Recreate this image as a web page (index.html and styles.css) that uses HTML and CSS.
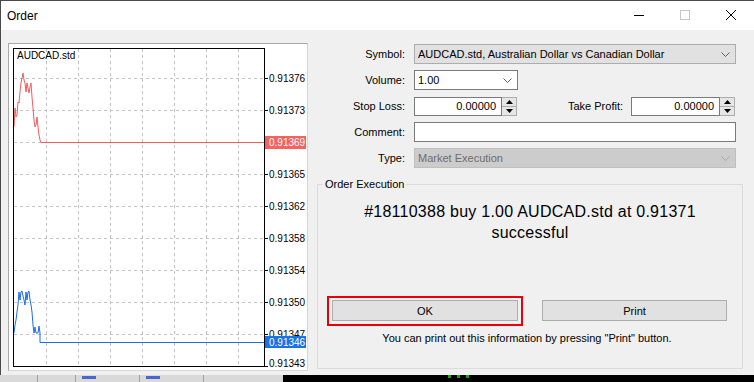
FILE: index.html
```html
<!DOCTYPE html>
<html lang="en">
<head>
    <meta charset="UTF-8">
    <title>Order</title>
    <link rel="stylesheet" href="styles.css">
</head>
<body>
<div class="window">
    <div class="titlebar">
        <span class="title">Order</span>
        <div class="caption">
            <svg width="46" height="29" viewBox="0 0 46 29"><line x1="18" y1="14.5" x2="28" y2="14.5" stroke="#000"/></svg>
            <svg width="46" height="29" viewBox="0 0 46 29"><rect x="18.5" y="9.5" width="9" height="9" fill="none" stroke="#c6c6c6"/></svg>
            <svg width="46" height="29" viewBox="0 0 46 29"><path d="M18 9 L28 19 M28 9 L18 19" stroke="#000" stroke-width="1"/></svg>
        </div>
    </div>

    <div class="content">
        <div class="chart-panel">
            <svg width="298" height="326" viewBox="9 44 298 326">
                <defs>
                    <clipPath id="above-blue"><rect x="265" y="300" width="41" height="36"/></clipPath>
                </defs>
                <rect x="9" y="44" width="298" height="326" fill="#fff"/>
                <!-- grid -->
                <g stroke="#c4c4c4" stroke-dasharray="3 3" shape-rendering="crispEdges">
                    <line x1="46.5" y1="49" x2="46.5" y2="366"/>
                    <line x1="78.5" y1="49" x2="78.5" y2="366"/>
                    <line x1="110.5" y1="49" x2="110.5" y2="366"/>
                    <line x1="142.5" y1="49" x2="142.5" y2="366"/>
                    <line x1="174.5" y1="49" x2="174.5" y2="366"/>
                    <line x1="206.5" y1="49" x2="206.5" y2="366"/>
                    <line x1="238.5" y1="49" x2="238.5" y2="366"/>
                    <line x1="14" y1="78.5" x2="264" y2="78.5"/>
                    <line x1="14" y1="110.5" x2="264" y2="110.5"/>
                    <line x1="14" y1="142.5" x2="264" y2="142.5"/>
                    <line x1="14" y1="174.5" x2="264" y2="174.5"/>
                    <line x1="14" y1="206.5" x2="264" y2="206.5"/>
                    <line x1="14" y1="238.5" x2="264" y2="238.5"/>
                    <line x1="14" y1="270.5" x2="264" y2="270.5"/>
                    <line x1="14" y1="302.5" x2="264" y2="302.5"/>
                    <line x1="14" y1="334.5" x2="264" y2="334.5"/>
                </g>
                <!-- price lines -->
                <polyline fill="none" stroke="#f25c5c" points="14,127 15,108 16,117 17,115 18,102 19,103 20,92 21,83 22,78 23,73 24,80 25,83 26,92 27,83 28,88 29,93 30,87 31,83 32,97 33,108 34,120 35,127 36,125 37,117 38,127 39,135 40,140 41,142.5 264,142.5"/>
                <polyline fill="none" stroke="#1a6cf0" points="14,333 15,325 16,320 17,312 18,305 19,292 20,300 21,292 22,291 23,296 24,300 25,305 26,292 27,300 28,292 29,291 30,300 31,305 32,312 33,325 34,333 35,327 36,333 37,333 38,333 39,326 40,333 40,342.5 264,342.5"/>
                <!-- frame -->
                <rect x="13.5" y="48.5" width="251" height="318" fill="none" stroke="#000" shape-rendering="crispEdges"/>
                <text class="sym" x="17" y="59">AUDCAD.std</text>
                <!-- axis -->
                <g stroke="#000" shape-rendering="crispEdges">
                    <line x1="264" y1="78.5" x2="268" y2="78.5"/>
                    <line x1="264" y1="110.5" x2="268" y2="110.5"/>
                    <line x1="264" y1="174.5" x2="268" y2="174.5"/>
                    <line x1="264" y1="206.5" x2="268" y2="206.5"/>
                    <line x1="264" y1="238.5" x2="268" y2="238.5"/>
                    <line x1="264" y1="270.5" x2="268" y2="270.5"/>
                    <line x1="264" y1="302.5" x2="268" y2="302.5"/>
                    <line x1="264" y1="334.5" x2="268" y2="334.5"/>
                    <line x1="264" y1="366.5" x2="268" y2="366.5"/>
                </g>
                <g class="axis">
                    <text x="269" y="82">0.91376</text>
                    <text x="269" y="114">0.91373</text>
                    <text x="269" y="178">0.91365</text>
                    <text x="269" y="210">0.91362</text>
                    <text x="269" y="242">0.91358</text>
                    <text x="269" y="274">0.91354</text>
                    <text x="269" y="306">0.91350</text>
                    <text x="269" y="338" clip-path="url(#above-blue)">0.91347</text>
                    <text x="269" y="367">0.91343</text>
                </g>
                <rect x="265" y="136" width="41" height="13" fill="#f56262"/>
                <text class="axis-hl" x="269" y="146">0.91369</text>
                <rect x="265" y="336" width="41" height="12" fill="#1873e8"/>
                <text class="axis-hl" x="269" y="346">0.91346</text>
            </svg>
        </div>

        <div class="side">
            <div class="form">
                <label>Symbol:</label>
                <div class="combo">
                    <span class="combo-text">AUDCAD.std, Australian Dollar vs Canadian Dollar</span>
                    <svg class="chev" width="9" height="5" viewBox="0 0 9 5"><polyline points="0.5,0.5 4.5,4.5 8.5,0.5" fill="none" stroke="#606060"/></svg>
                </div>

                <label>Volume:</label>
                <div class="combo edit volume">
                    <span class="combo-text">1.00</span>
                    <svg class="chev" width="9" height="5" viewBox="0 0 9 5"><polyline points="0.5,0.5 4.5,4.5 8.5,0.5" fill="none" stroke="#606060"/></svg>
                </div>

                <label>Stop Loss:</label>
                <div class="stops">
                    <div class="spin-field">
                        <span class="num">0.00000</span>
                        <div class="spinner">
                            <span><svg width="7" height="4" viewBox="0 0 7 4"><path d="M0 4 L3.5 0 L7 4 Z"/></svg></span>
                            <span><svg width="7" height="4" viewBox="0 0 7 4"><path d="M0 0 L3.5 4 L7 0 Z"/></svg></span>
                        </div>
                    </div>
                    <label class="tp-label">Take Profit:</label>
                    <div class="spin-field tp">
                        <span class="num">0.00000</span>
                        <div class="spinner">
                            <span><svg width="7" height="4" viewBox="0 0 7 4"><path d="M0 4 L3.5 0 L7 4 Z"/></svg></span>
                            <span><svg width="7" height="4" viewBox="0 0 7 4"><path d="M0 0 L3.5 4 L7 0 Z"/></svg></span>
                        </div>
                    </div>
                </div>

                <label>Comment:</label>
                <div class="textbox"></div>

                <label>Type:</label>
                <div class="combo disabled">
                    <span class="combo-text">Market Execution</span>
                    <svg class="chev" width="9" height="5" viewBox="0 0 9 5"><polyline points="0.5,0.5 4.5,4.5 8.5,0.5" fill="none" stroke="#a9a9a9"/></svg>
                </div>
            </div>

            <fieldset class="exec">
                <legend>Order Execution</legend>
                <p class="msg">#18110388 buy 1.00 AUDCAD.std at 0.91371<br>successful</p>
                <div class="buttons">
                    <div class="focus"><button class="btn ok">OK</button></div>
                    <button class="btn print">Print</button>
                </div>
                <p class="note">You can print out this information by pressing "Print" button.</p>
            </fieldset>
        </div>
    </div>
</div>
<!-- window behind the dialog -->
<div class="backdrop">
    <div class="back-left">
        <i class="cell"></i><i class="cell"></i><i class="mark"></i><i class="cell"></i><i class="mark"></i><i class="cell"></i>
    </div>
    <div class="back-right">
        <i class="tick"></i><i class="tick"></i><i class="tick"></i>
    </div>
</div>
</body>
</html>
```

FILE: styles.css
```css
* {
    box-sizing: border-box;
}
body {
    margin: 0;
    width: 754px;
    height: 382px;
    overflow: hidden;
    font-family: 'Liberation Sans', Arial, sans-serif;
    font-size: 11px;
    color: #000;
    background: #1b1b1b;
}
.window {
    width: 754px;
    height: 375px;
    background-color: #f0f0f0;
    border-top: 1px solid #4a4a4a;
    border-left: 1px solid #4a4a4a;
}
.titlebar {
    height: 29px;
    background: #fff;
    display: flex;
    align-items: center;
}
.title {
    font-size: 12px;
    margin-left: 6px;
    flex: 1;
}
.caption {
    display: flex;
}
.caption svg {
    display: block;
}
.content {
    display: flex;
    padding-left: 7px;
}
.chart-panel {
    width: 300px;
    height: 328px;
    margin-top: 13px;
    border: 1px solid #a8a8a8;
    border-right-color: #d6d6d6;
    border-bottom-color: #d6d6d6;
    background: #fff;
}
.chart-panel svg {
    display: block;
}
.chart-panel text {
    font-family: 'Liberation Sans', Arial, sans-serif;
    font-size: 10px;
}
.axis text {
    fill: #000;
}
.axis-hl {
    fill: #fff;
}
.side {
    width: 426px;
    margin-left: 9px;
    margin-top: 14px;
}
.form {
    width: 419px;
    display: grid;
    grid-template-columns: 88px 322px;
    column-gap: 9px;
    row-gap: 6px;
    grid-auto-rows: 20px;
}
.form label {
    text-align: right;
    line-height: 20px;
}
.combo {
    display: flex;
    align-items: center;
    height: 20px;
    padding: 0 5px 0 3px;
    background: #e1e1e1;
    border: 1px solid #adadad;
}
.combo-text {
    flex: 1;
    white-space: nowrap;
}
.combo .chev {
    display: block;
}
.combo.edit {
    background: #fff;
    border-color: #7a7a7a;
}
.volume {
    width: 104px;
}
.combo.disabled {
    background: #cccccc;
    border-color: #bfbfbf;
    color: #6d6d6d;
}
.stops {
    display: flex;
    align-items: center;
}
.spin-field {
    display: flex;
    width: 103px;
    height: 19px;
}
.spin-field.tp {
    width: 104px;
}
.num {
    flex: 1;
    background: #fff;
    border: 1px solid #7a7a7a;
    text-align: right;
    padding-right: 5px;
    line-height: 17px;
}
.spinner {
    width: 15px;
    display: flex;
    flex-direction: column;
    border: 1px solid #adadad;
    border-left: none;
    background: #e6e6e6;
}
.spinner span {
    flex: 1;
    display: flex;
    align-items: center;
    justify-content: center;
}
.spinner span + span {
    border-top: 1px solid #adadad;
}
.spinner svg {
    display: block;
}
.tp-label {
    width: 106px;
    margin-right: 8px;
}
.textbox {
    height: 20px;
    background: #fff;
    border: 1px solid #7a7a7a;
}
.exec {
    margin: 10px 0 0;
    padding: 0;
    width: 426px;
    height: 191px;
    border: 1px solid #dcdcdc;
}
.exec legend {
    margin-left: 5px;
    padding: 0 2px;
    line-height: 13px;
}
.msg {
    margin: 10px 0 0;
    text-align: center;
    font-size: 16px;
    line-height: 21px;
    letter-spacing: 0.25px;
}
.buttons {
    display: flex;
    margin-top: 53px;
    padding-left: 9px;
}
.focus {
    border: 2px solid #e8000b;
    padding: 2px 3px 3px;
}
.btn {
    display: block;
    height: 21px;
    margin: 0;
    padding: 0;
    font-family: inherit;
    font-size: 11px;
    color: #000;
    background: #e1e1e1;
    border: 1px solid #adadad;
}
.ok {
    width: 186px;
}
.print {
    width: 185px;
    margin-top: 4px;
    margin-left: 19px;
}
.note {
    margin: 6px 0 0;
    padding: 0 15px 0 9px;
    text-align: center;
    line-height: 13px;
}
.backdrop {
    display: flex;
    height: 7px;
}
.back-left {
    width: 283px;
    background: #d9d9d9;
    display: flex;
    align-items: flex-start;
}
.back-left .cell {
    width: 38px;
    height: 7px;
    border-right: 1px solid #a0a0a0;
}
.back-left .mark {
    width: 14px;
    height: 3px;
    margin: 1px 6px 0;
    background: #4a66d0;
}
.back-right {
    flex: 1;
    background: #000;
    display: flex;
    gap: 6px;
    padding-left: 165px;
}
.back-right .tick {
    width: 3px;
    height: 3px;
    background: #18a018;
}
```
